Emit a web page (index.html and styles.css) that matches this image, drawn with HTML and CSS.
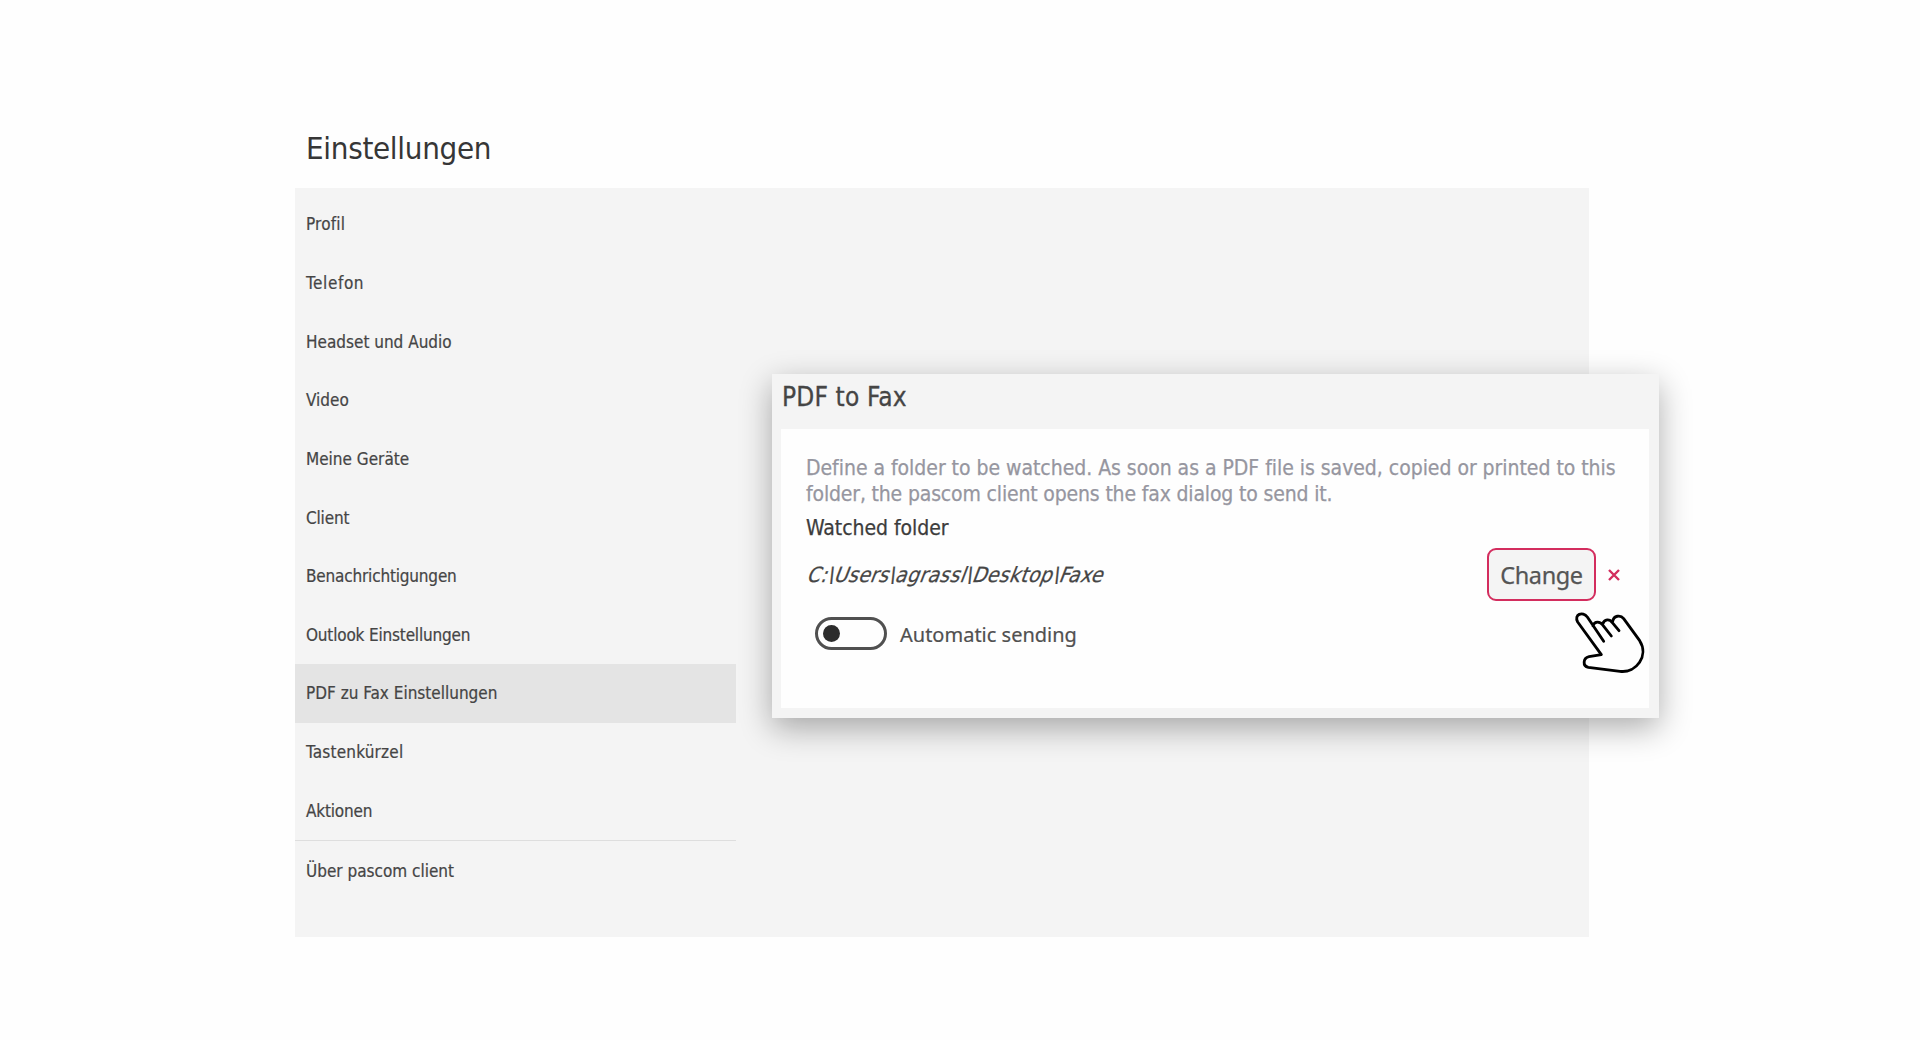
FILE: index.html
```html
<!DOCTYPE html>
<html lang="de">
<head>
<meta charset="utf-8">
<title>Einstellungen</title>
<link rel="stylesheet" href="styles.css">
</head>
<body>
<main class="settings">
  <h1 class="settings-title">Einstellungen</h1>
  <div class="panel">
    <nav class="nav">
      <a class="nav-item loose">Profil</a>
      <a class="nav-item looser">Telefon</a>
      <a class="nav-item">Headset und Audio</a>
      <a class="nav-item">Video</a>
      <a class="nav-item">Meine Geräte</a>
      <a class="nav-item tight">Client</a>
      <a class="nav-item tight">Benachrichtigungen</a>
      <a class="nav-item tight">Outlook Einstellungen</a>
      <a class="nav-item active">PDF zu Fax Einstellungen</a>
      <a class="nav-item loose">Tastenkürzel</a>
      <a class="nav-item tight">Aktionen</a>
      <a class="nav-item about">Über pascom client</a>
    </nav>
  </div>
</main>
<section class="dialog">
  <h2 class="dialog-title">PDF to Fax</h2>
  <div class="card">
    <p class="hint">Define a folder to be watched. As soon as a PDF file is saved, copied or printed to this<br><span class="hint-end">folder, the pascom client opens the fax dialog to send it.</span></p>
    <div class="label">Watched folder</div>
    <div class="folder-row">
      <em class="path">C:\Users\agrassl\Desktop\Faxe</em>
      <button class="change">Change</button>
      <svg class="remove" width="14" height="14" viewBox="0 0 14 14"><path d="M2 2L12 12M12 2L2 12"/></svg>
    </div>
    <div class="switch-row">
      <span class="switch"><i class="knob"></i></span>
      <span class="switch-label">Automatic sending</span>
    </div>
  </div>
  <svg class="cursor" width="90" height="85" viewBox="0 0 270 255">
    <path d="M116 124L67 51C53 32 26 44 38 66L109 164L72 170C54 174 52 198 70 202L165 214C215 220 252 166 224 122L176 56C166 43 146 47 143 64M84 78C88 62 106 64 114 76L139 108M113 72C118 56 134 56 142 68L162 92"/>
  </svg>
</section>
</body>
</html>
```
FILE: styles.css
```css
* { box-sizing: border-box; }
body {
  margin: 0;
  height: 1040px;
  overflow: hidden;
  background: #fefefe;
  color: #454545;
  font-family: "DejaVu Sans Condensed", "DejaVu Sans", sans-serif;
  font-stretch: condensed;
}
h1, h2, p { margin: 0; font-weight: normal; }

.settings { width: 1294px; margin-left: 295px; padding-top: 124px; }
.settings-title {
  height: 64px;
  padding-left: 11px;
  font-size: 31px;
  line-height: 49px;
  letter-spacing: -0.3px;
  color: #363636;
}
.panel { height: 749px; padding-top: 7px; background: #f4f4f4; }
.nav { width: 441px; }
.nav-item {
  display: flex;
  align-items: center;
  height: 58.65px;
  padding-left: 11px;
  font-size: 17px;
  letter-spacing: 0;
  -webkit-text-stroke: .2px;
}
.nav-item.tight { letter-spacing: -0.18px; }
.nav-item.loose { letter-spacing: 0.2px; }
.nav-item.looser { letter-spacing: 0.6px; }
.nav-item.active { background: #e4e4e4; }
.nav-item.about { height: 60px; border-top: 1px solid #dedede; }

.dialog {
  position: absolute;
  left: 772px;
  top: 374px;
  width: 887px;
  height: 344px;
  padding: 0 10px 10px 9px;
  background: #f4f4f4;
  box-shadow: 0 10px 30px rgba(0, 0, 0, .32);
}
.dialog-title {
  height: 55px;
  padding-left: 1px;
  line-height: 46px;
  font-size: 26px;
  letter-spacing: 0.15px;
  -webkit-text-stroke: .3px;
}
.card { height: 279px; padding: 26px 28px 0 25px; background: #fefefe; }
.hint {
  font-size: 21px;
  line-height: 26px;
  letter-spacing: -0.03px;
  color: #9696a0;
  white-space: nowrap;
  -webkit-text-stroke: .25px;
}
.hint-end { letter-spacing: -0.16px; }
.label {
  margin-top: 4px;
  font-size: 21px;
  line-height: 34px;
  letter-spacing: -0.05px;
  color: #3c3c3c;
  -webkit-text-stroke: .25px;
}
.folder-row { display: flex; align-items: center; height: 53px; margin-top: 3px; }
.path {
  margin-right: auto;
  padding: 1px 0 0 3px;
  font-size: 21px;
  font-style: normal;
  letter-spacing: 0.33px;
  transform: skewX(-21deg);
  -webkit-text-stroke: .25px;
}
.change {
  width: 109px;
  height: 53px;
  padding: 0;
  border: 2px solid #d32d5e;
  border-radius: 9px;
  background: #f4f4f4;
  color: #555;
  font: 23.5px "Noto Sans", sans-serif;
  letter-spacing: -0.4px;
  -webkit-text-stroke: .25px;
}
.remove { margin-left: 11px; fill: none; stroke: #d32d5e; stroke-width: 2.4; }
.switch-row { display: flex; align-items: center; margin-top: 16px; padding-left: 9px; height: 33px; }
.switch {
  display: flex;
  align-items: center;
  width: 72px;
  height: 33px;
  padding-left: 5px;
  border: 3px solid #505050;
  border-radius: 17px;
}
.knob { width: 17px; height: 17px; border-radius: 50%; background: #2c2c2c; }
.switch-label {
  margin-left: 13px;
  padding-top: 2px;
  font: 20px "Noto Sans", sans-serif;
  color: #505050;
  -webkit-text-stroke: .2px;
}
.cursor {
  position: absolute;
  left: 793px;
  top: 226px;
  fill: none;
  stroke: #000;
  stroke-width: 8.5;
  stroke-linecap: round;
  stroke-linejoin: round;
}
```
